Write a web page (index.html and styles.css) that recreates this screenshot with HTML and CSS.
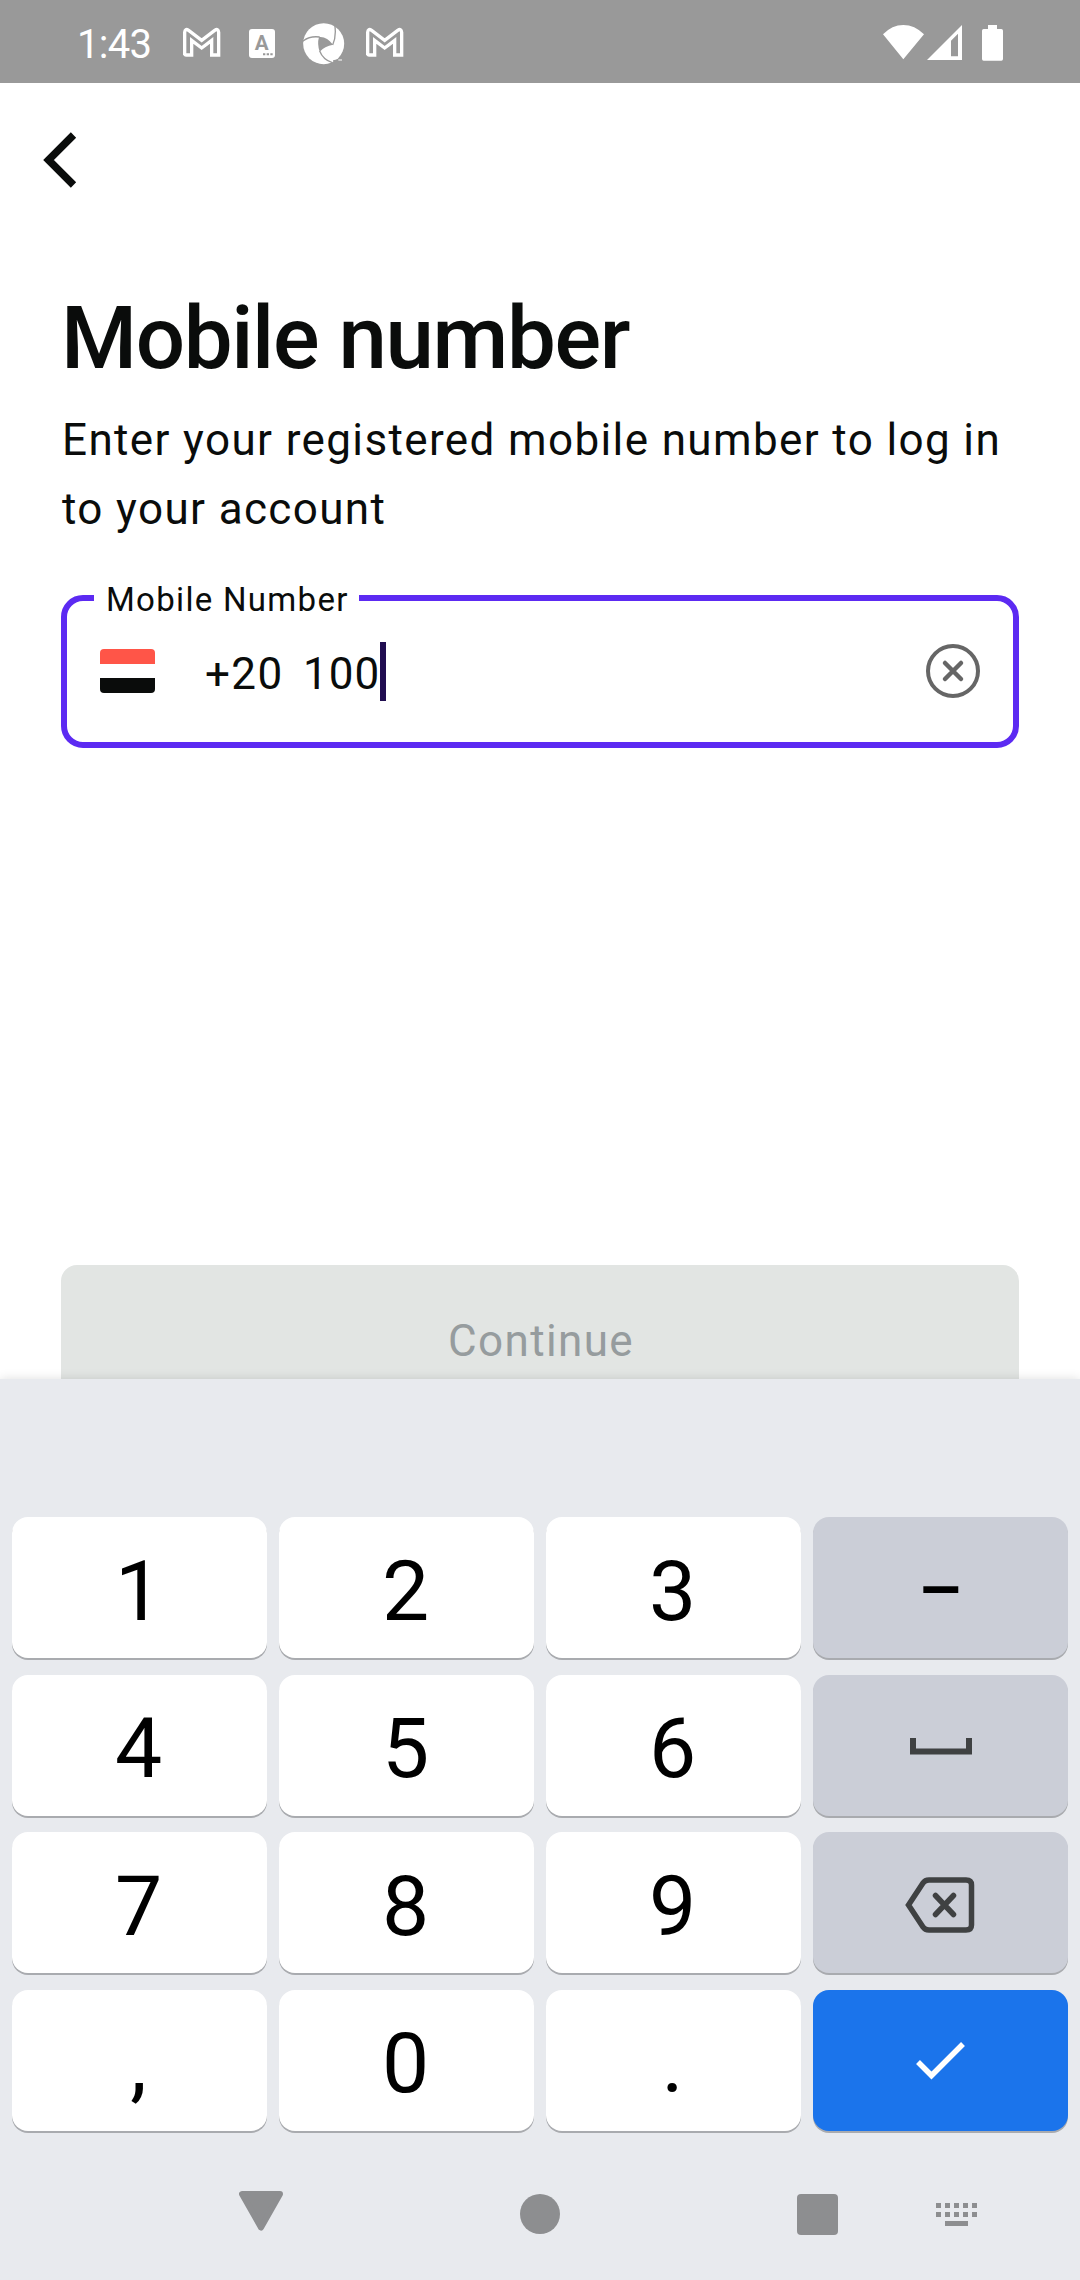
FILE: index.html
```html
<!DOCTYPE html>
<html lang="en">
<head>
<meta charset="utf-8">
<title>Mobile number</title>
<link rel="stylesheet" href="styles.css">
</head>
<body>
<div class="screen">
  <header class="status">
    <span class="clock">1:43</span>
    <svg class="mail" viewBox="366 52 118 90"><path d="M374 136V68Q375 55 386 62L425 92L464 62Q475 55 476 68V136H455V92L425 115L395 92V136H379Q374 136 374 131Z"/></svg>
    <svg class="doc" viewBox="0 0 78 87"><rect width="78" height="87" rx="9" fill="#fff"/><text x="38" y="63" text-anchor="middle">A</text><path d="M42 73h7v6h-7zM53 73h7v6h-7zM64 73h7v6h-7z" fill="#999"/></svg>
    <svg class="aperture" viewBox="728 38 126 126"><circle cx="790" cy="100" r="61.500" fill="#fff"/><path d="M776 80Q799 77 818 103Q793 107 778 124Q770 101 776 80Z" fill="#999"/><path d="M727 93Q748 76 778 80M817 104Q829 77 823 42M778 122Q788 148 816 157" fill="none" stroke="#999" stroke-width="4"/><path d="M818 150l14 -3l-12 15z" fill="#999"/><path d="M834 149h11" stroke="#fff" stroke-width="3"/></svg>
    <svg class="mail second" viewBox="366 52 118 90"><path d="M374 136V68Q375 55 386 62L425 92L464 62Q475 55 476 68V136H455V92L425 115L395 92V136H379Q374 136 374 131Z"/></svg>
    <svg class="signals" viewBox="246 72 366 114"><path fill="#fff" fill-rule="evenodd" d="M249 103Q276 75 310 75T372 103L310 178ZM381 180L486 75V180ZM453 122V169H474V101ZM564 75H591V87H604Q609 87 609 92V177Q609 182 604 182H551Q546 182 546 177V92Q546 87 551 87H564Z"/></svg>
  </header>

  <main class="page">
    <svg class="back" viewBox="0 0 36 58"><path d="M31.500 4L6.500 29L31.500 54"/></svg>
    <h1 class="title">Mobile number</h1>
    <p class="lead">Enter your registered mobile number to log in to your account</p>
    <div class="field">
      <span class="label">Mobile Number</span>
      <span class="flag"><i class="red"></i><i class="white"></i><i class="black"></i></span>
      <span class="code">+20</span>
      <span class="number">100</span>
      <span class="caret"></span>
      <svg class="clear" viewBox="0 0 54 54"><circle cx="27" cy="27" r="25"/><path d="M19 19L35 35M35 19L19 35"/></svg>
    </div>
    <div class="continue">Continue</div>
  </main>

  <section class="keyboard">
    <div class="keys">
      <div class="key">1</div><div class="key">2</div><div class="key">3</div><div class="key alt dash">–</div>
      <div class="key">4</div><div class="key">5</div><div class="key">6</div>
      <div class="key alt"><svg class="space" viewBox="0 0 62 17"><path d="M3 0V13.500H59V0"/></svg></div>
      <div class="key">7</div><div class="key">8</div><div class="key">9</div>
      <div class="key alt"><svg class="delete" viewBox="0 0 70 56"><path d="M3.500 28L18 6Q20 3 24 3H61Q66.500 3 66.500 8V48Q66.500 53 61 53H24Q20 53 18 50Z"/><path d="M30.500 18.500L48.500 37.500M48.500 18.500L30.500 37.500"/></svg></div>
      <div class="key">,</div><div class="key">0</div><div class="key">.</div>
      <div class="key enter"><svg class="check" viewBox="0 0 50 38"><path d="M2 20L15.500 33.500L47 2"/></svg></div>
    </div>
    <nav class="nav">
      <svg class="nav-back" viewBox="0 0 44 40"><path d="M3 3H41L22 36.500Z"/></svg>
      <span class="home"></span>
      <span class="recent"></span>
      <svg class="ime" viewBox="0 0 42 23"><path d="M0 0h5v5h-5zM9 0h5v5h-5zM18 0h5v5h-5zM27 0h5v5h-5zM36 0h5v5h-5zM0 9h5v5h-5zM9 9h5v5h-5zM18 9h5v5h-5zM27 9h5v5h-5zM36 9h5v5h-5zM9 18h23v5h-23z"/></svg>
    </nav>
  </section>
</div>
</body>
</html>
```
FILE: styles.css
```css
* { box-sizing: border-box; }
body {
  margin: 0;
  font-family: Roboto, sans-serif;
  color: #0a0c0b;
}
svg { display: block; flex: none; }
.screen {
  width: 1080px;
  height: 2280px;
  display: flex;
  flex-direction: column;
  overflow: hidden;
  background: #fff;
}

/* Status bar */
.status {
  height: 83px;
  flex: none;
  display: flex;
  align-items: flex-start;
  background: #999;
  color: #fff;
}
.clock {
  width: 105px;
  margin-left: 77px;
  margin-top: 21px;
  font-size: 40px;
  line-height: 48px;
  letter-spacing: -0.7px;
}
.mail { width: 39.33px; height: 30px; margin-top: 27px; }
.mail path { fill: none; stroke: #fff; stroke-width: 10; }
.doc { width: 26px; height: 29px; margin: 29px 0 0 27.500px; }
.doc text { font: 700 62px Roboto, sans-serif; fill: #999; }
.aperture { width: 42px; height: 42px; margin: 22.500px 0 0 28px; }
.second { margin-left: 20px; }
.signals { width: 122px; height: 38px; margin: 24px 76px 0 auto; }

/* Form */
.page {
  height: 1296px;
  flex: none;
  padding: 48px 61px 0;
  display: flex;
  flex-direction: column;
}
.back { width: 36px; height: 58px; margin-left: -19px; }
.back path { fill: none; stroke: #0a0c0b; stroke-width: 7.5; }
.title {
  margin: 97px 0 0;
  font-size: 87px;
  line-height: 104px;
  font-weight: 550;
  letter-spacing: -1.35px;
  white-space: nowrap;
}
.lead {
  margin: 16px -10px 0 1px;
  font-size: 44px;
  line-height: 69px;
  letter-spacing: 1.375px;
}
.field {
  position: relative;
  height: 153px;
  flex: none;
  margin-top: 51px;
  border: 6px solid #5c2af2;
  border-radius: 22px;
  display: flex;
  align-items: flex-start;
  font-size: 44px;
  line-height: 52px;
  letter-spacing: 1.375px;
}
.label {
  position: absolute;
  left: 27px;
  top: -19px;
  width: 265px;
  height: 36px;
  padding-left: 12px;
  background: #fff;
  font-size: 33px;
  line-height: 36px;
  letter-spacing: 1.3px;
  white-space: nowrap;
}
.flag {
  width: 55px;
  height: 44px;
  margin: 48px 0 0 33px;
  border-radius: 4px;
  overflow: hidden;
  display: flex;
  flex-direction: column;
}
.flag i { flex: 1; }
.red { background: #ff5548; }
.white { background: #fff; }
.black { background: #0a0c0b; }
.code { width: 98px; margin: 47px 0 0 50px; }
.number { width: 77px; margin-top: 47px; letter-spacing: 1px; }
.caret { width: 6px; height: 59px; margin: 41px 0 0 0; background: #200d50; }
.clear { width: 54px; height: 54px; margin: 43px 33px 0 auto; }
.clear circle, .clear path { fill: none; stroke: #666; stroke-width: 4; stroke-linecap: round; }
.clear path { stroke-width: 4.5; }
.continue {
  height: 114px;
  flex: none;
  margin-top: auto;
  padding: 50px 0 0 2px;
  border-radius: 16px 16px 0 0;
  background: #e2e5e3;
  color: #969c9e;
  font-size: 44px;
  line-height: 52px;
  letter-spacing: 1.375px;
  text-align: center;
}

/* Keyboard */
.keyboard {
  flex: 1;
  padding: 138px 12px 0;
  background: #e8eaee;
  box-shadow: 0 0 10px rgba(0, 0, 0, 0.13);
}
.keys {
  display: grid;
  grid-template-columns: repeat(4, 255px);
  grid-auto-rows: 141px;
  gap: 16.6px 12px;
}
.key {
  display: flex;
  align-items: center;
  justify-content: center;
  border-radius: 16px;
  background: #fff;
  box-shadow: 0 2px 0 #a9abaf;
  color: #000;
  font-size: 84px;
  line-height: 98px;
  padding: 8px 2px 0 0;
}
.alt { background: #cbced7; padding: 0; }
.enter { background: #1b74eb; padding: 0; }
.dash { font-size: 70px; font-weight: 500; padding-top: 6px; }
.space { width: 62px; height: 17px; margin-top: 2px; }
.space path { fill: none; stroke: #3f4142; stroke-width: 6; }
.delete { width: 70px; height: 56px; margin: 5px 2px 0 0; }
.delete path { fill: none; stroke: #3f4142; stroke-width: 5.5; stroke-linecap: round; }
.check { width: 50px; height: 38px; margin-top: 2px; }
.check path { fill: none; stroke: #fff; stroke-width: 5.5; }

/* System navigation */
.nav { display: flex; align-items: flex-start; }
.nav-back { width: 44px; height: 40px; margin: 60px 0 0 227px; }
.nav-back path { fill: #8d8e90; stroke: #8d8e90; stroke-width: 6; stroke-linejoin: round; }
.home { width: 40px; height: 40px; margin: 63px 0 0 237px; border-radius: 50%; background: #8d8e90; }
.recent { width: 41px; height: 41px; margin: 63px 0 0 237px; border-radius: 4px; background: #8d8e90; }
.ime { width: 42px; height: 23px; margin: 72px 0 0 98px; }
.ime path { fill: #8d8e90; }
```
